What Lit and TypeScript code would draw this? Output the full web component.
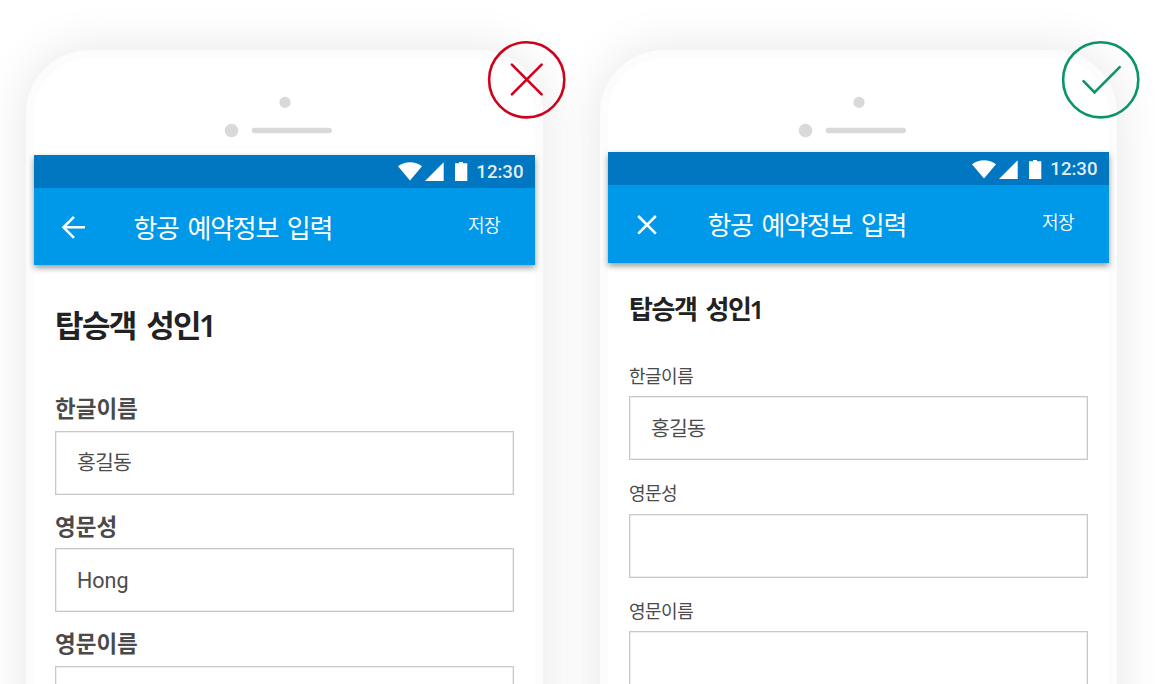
import { LitElement, html, css, svg, nothing } from "lit";
import { customElement, property } from "lit/decorators.js";
import { classMap } from "lit/directives/class-map.js";

interface Field {
  label: string;
  value: string;
}

@customElement("verdict-badge")
class VerdictBadge extends LitElement {
  @property() kind = "bad";

  static styles = css`
    :host { display: block; }
    svg { display: block; width: 80px; height: 80px; fill: none; stroke-width: 2.6; }
    .bad { stroke: #d0021b; }
    .good { stroke: #0a9568; }
    .mark { stroke-linecap: round; }
  `;

  render() {
    const good = this.kind === "good";
    return html`
      <svg viewBox="0 0 80 80" class=${good ? "good" : "bad"}>
        <circle cx="39.7" cy="39.8" r="37.6"></circle>
        ${good
          ? svg`<path class="mark" d="M22.5 41.2 33.5 52.5 58.7 27.2"></path>`
          : svg`<path class="mark" d="M24.9 24.7 54.6 54.4M54.6 24.7 24.9 54.4"></path>`}
      </svg>
    `;
  }
}

@customElement("status-bar")
class StatusBar extends LitElement {
  static styles = css`
    :host {
      display: flex;
      justify-content: flex-end;
      align-items: center;
      height: 33.5px;
      background: #0077c0;
      color: rgba(255, 255, 255, 0.9);
      font: 500 18.6px/33px Roboto, sans-serif;
      padding-right: 11.5px;
      box-sizing: border-box;
    }
    svg { display: block; width: 72px; height: 22px; fill: #fff; margin-right: 6.5px; }
    .time { padding-top: 2px; }
  `;

  render() {
    return html`
      <svg viewBox="0 0 72 22">
        <path d="M0 6.3C7 .9 17 .9 24 6.3L12 20.5Z"></path>
        <path d="M27 21 45.7 2.2V21Z"></path>
        <path d="M57 3.3h4V2h4v1.3h4.3V21H57Z"></path>
      </svg>
      <span class="time">12:30</span>
    `;
  }
}

@customElement("phone-mockup")
class PhoneMockup extends LitElement {
  @property() kind = "bad";
  @property({ attribute: false }) fields: Field[] = [];

  static styles = css`
    :host { display: block; position: relative; }
    .phone {
      box-sizing: border-box;
      width: 517px;
      height: 900px;
      border: 8px solid #fcfcfc;
      border-radius: 64px;
      background: #fff;
      box-shadow: 0 0 50px rgba(0, 0, 0, 0.1);
      font-family: "Noto Sans CJK KR", sans-serif;
    }
    .top {
      height: 96.5px;
      box-sizing: border-box;
      padding-top: 38px;
    }
    .good .top { height: 93.8px; }
    .top svg { display: block; width: 110px; height: 42px; margin-left: 190px; fill: #d9d9d9; }
    .bars { box-shadow: 0 3px 6px rgba(0, 0, 0, 0.4); }
    .appbar {
      display: flex;
      align-items: center;
      height: 77.3px;
      background: #0099ea;
      color: #fff;
      padding: 0 35px 0 26px;
    }
    .nav { width: 26px; height: 26px; fill: none; stroke: #fff; stroke-width: 2.6; margin-right: 47.5px; }
    .title {
      flex: 1;
      font-size: 26px;
      line-height: 40px;
      letter-spacing: -1.3px;
      word-spacing: 4.3px;
      white-space: nowrap;
    }
    .good .title { padding-top: 1px; }
    .save { font-size: 18px; line-height: 26px; letter-spacing: -0.6px; padding-bottom: 5px; font-weight: 350; }
    .form { padding: 0 21.5px 0 21px; }
    .heading {
      box-sizing: border-box;
      height: 84px;
      margin-bottom: 41px;
      padding-top: 36px;
      color: #222;
      font-weight: 700;
      font-size: 31px;
      line-height: 46px;
      letter-spacing: -1.6px;
      word-spacing: 5px;
      white-space: nowrap;
    }
    .digit { font-family: "Noto Sans", sans-serif; font-weight: 600; margin-left: -1px; }
    .field { height: 117.5px; }
    .label {
      height: 40.7px;
      color: #4a4a4a;
      font-weight: 700;
      font-size: 22.5px;
      line-height: 34px;
      letter-spacing: 0;
    }
    .box {
      box-sizing: border-box;
      height: 64px;
      border: 1px solid #c8c8c8;
      box-shadow: inset 0 0 0 0.5px #dedede;
      display: flex;
      align-items: center;
      padding: 0 21px 3px;
      color: #4c4c4c;
      font-size: 20.5px;
      line-height: 30px;
      letter-spacing: -0.8px;
    }
    .latin { font-family: Roboto, sans-serif; font-size: 21.5px; letter-spacing: 0; padding-top: 5px; }
    .good .heading {
      height: 63px;
      margin-bottom: 36px;
      padding-top: 26px;
      font-size: 26px;
      line-height: 38px;
      letter-spacing: -1.4px;
      word-spacing: 4.5px;
    }
    .good .label { font-weight: 400; font-size: 18px; line-height: 27px; height: 34.6px; letter-spacing: -0.5px; }
    .badge { position: absolute; left: 461px; top: -10px; }
  `;

  render() {
    const good = this.kind === "good";
    return html`
      <div class=${classMap({ phone: true, good })}>
        <div class="top">
          <svg viewBox="0 0 110 42">
            <circle cx="61" cy="6.4" r="5.6"></circle>
            <circle cx="7.5" cy="34.5" r="6.8"></circle>
            <rect x="27.7" y="31.7" width="80.3" height="5.6" rx="2.8"></rect>
          </svg>
        </div>
        <div class="bars">
          <status-bar></status-bar>
          <div class="appbar">
            <svg class="nav" viewBox="0 0 26 26">
              ${good
                ? svg`<path d="M4.2 5 21.8 22.6M21.8 5 4.2 22.6"></path>`
                : svg`<path d="M25 13.3H4M14 2.8 3.5 13.3 14 23.8"></path>`}
            </svg>
            <span class="title">항공 예약정보 입력</span>
            <span class="save">저장</span>
          </div>
        </div>
        <div class="form">
          <div class="heading">탑승객 성인<span class="digit">1</span></div>
          ${this.fields.map(
            (f) => html`
              <div class="field">
                <div class="label">${f.label}</div>
                <div class="box">
                  ${f.value
                    ? html`<span class=${classMap({ latin: /^[A-Za-z]+$/.test(f.value) })}>${f.value}</span>`
                    : nothing}
                </div>
              </div>
            `
          )}
        </div>
      </div>
      <verdict-badge class="badge" kind=${this.kind}></verdict-badge>
    `;
  }
}

@customElement("app-root")
class AppRoot extends LitElement {
  static styles = css`
    :host {
      display: flex;
      gap: 57px;
      box-sizing: border-box;
      width: 1155px;
      height: 684px;
      padding: 50px 0 0 26px;
      overflow: hidden;
      background: #fff;
    }
  `;

  private before: Field[] = [
    { label: "한글이름", value: "홍길동" },
    { label: "영문성", value: "Hong" },
    { label: "영문이름", value: "" },
  ];

  private after: Field[] = [
    { label: "한글이름", value: "홍길동" },
    { label: "영문성", value: "" },
    { label: "영문이름", value: "" },
  ];

  render() {
    return html`
      <phone-mockup kind="bad" .fields=${this.before}></phone-mockup>
      <phone-mockup kind="good" .fields=${this.after}></phone-mockup>
    `;
  }
}
